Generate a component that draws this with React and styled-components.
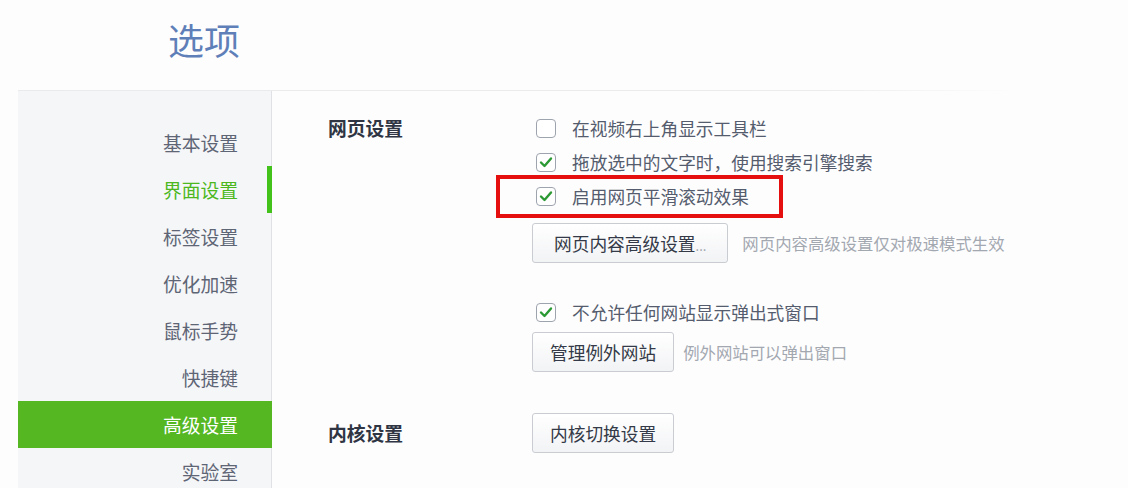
import styled, { createGlobalStyle } from "styled-components";

const GlobalStyle = createGlobalStyle`
  html, body {
    margin: 0;
    padding: 0;
    background: #fdfdfe;
    font-family: "Noto Sans CJK SC", "Noto Sans", sans-serif;
  }
`;

const Page = styled.div`
  width: 1128px;
  height: 488px;
  overflow: hidden;
  padding-left: 18px;
  box-sizing: border-box;
`;

const Header = styled.div`
  height: 90px;
  display: flex;
  align-items: center;
  padding-left: 150px;
  box-sizing: border-box;
`;

const Title = styled.h1`
  margin: 0;
  margin-top: -12px;
  font-size: 36px;
  font-weight: 400;
  color: #5f7fb8;
`;

const Divider = styled.div`
  width: 998px;
  height: 1px;
  background: linear-gradient(to right, #e9eaec 0%, #ebecee 80%, #fdfdfe 100%);
`;

const Body = styled.div`
  display: flex;
`;

const Sidebar = styled.nav`
  width: 254px;
  height: 398px;
  background: #f5f6f8;
  border-right: 1px solid #dfe1e5;
  box-sizing: border-box;
  padding-top: 28px;
  display: flex;
  flex-direction: column;
`;

const NavItem = styled.div`
  position: relative;
  height: 47px;
  flex: none;
  display: flex;
  align-items: center;
  justify-content: flex-end;
  padding-right: 34px;
  margin-right: -1px;
  font-size: 18.8px;
  color: ${(p) => (p.$selected ? "#ffffff" : p.$current ? "#4cb81e" : "#5e6575")};
  background: ${(p) => (p.$selected ? "#55b823" : "transparent")};

  &::after {
    content: "";
    display: ${(p) => (p.$current ? "block" : "none")};
    position: absolute;
    right: 0;
    top: 0;
    width: 5px;
    height: 47px;
    background: #43c21c;
  }
`;

const Content = styled.div`
  padding: 20px 0 0 56px;
  display: flex;
  flex-direction: column;
`;

const Section = styled.div`
  display: grid;
  grid-template-columns: 208px auto;
  margin-top: ${(p) => p.$gap || 0}px;
`;

const SectionLabel = styled.div`
  height: 34px;
  line-height: 34px;
  align-self: ${(p) => (p.$center ? "center" : "start")};
  font-size: 18.8px;
  font-weight: 700;
  color: #2f3543;
`;

const Options = styled.div`
  display: flex;
  flex-direction: column;
`;

const CheckRow = styled.label`
  position: relative;
  height: 34px;
  display: flex;
  align-items: center;
  gap: 16px;
  margin-top: ${(p) => p.$gap || 0}px;
  font-size: 17.7px;
  color: #545c6d;

  &::before {
    content: "";
    display: ${(p) => (p.$marked ? "block" : "none")};
    position: absolute;
    left: -40px;
    top: -4px;
    width: 287px;
    height: 43px;
    border: 4.5px solid #e60f0f;
    box-sizing: border-box;
  }
`;

const Box = styled.span`
  width: 20px;
  height: 19px;
  box-sizing: border-box;
  border: 1.5px solid #9ea4ad;
  border-radius: 4px;
  background: #fff;
  display: flex;
  align-items: center;
  justify-content: center;
`;

const ButtonRow = styled.div`
  display: flex;
  align-items: center;
  gap: ${(p) => p.$gap || 12}px;
  margin-top: ${(p) => p.$top || 0}px;
  margin-left: -4px;
`;

const Button = styled.button`
  height: 40px;
  padding: 0 ${(p) => p.$pad || 17}px;
  border: 1px solid #c9ccd1;
  border-radius: 3px;
  background: linear-gradient(#ffffff, #f2f3f5);
  font-family: inherit;
  font-size: 17.7px;
  color: #343a47;
  cursor: pointer;
`;

const Dots = styled.span`
  color: #9aa0a8;
  font-size: 13px;
`;

const Hint = styled.span`
  font-size: 16.4px;
  color: #a3a8b0;
`;

const Check = ({ checked }) => (
  <Box>
    {checked && (
      <svg width="14" height="12" viewBox="0 0 14 12">
        <path d="M2 6.5 L5.5 10 L12 2.5" fill="none" stroke="#2c9a34" strokeWidth="2.4" strokeLinecap="round" strokeLinejoin="round" />
      </svg>
    )}
  </Box>
);

const navItems = ["基本设置", "界面设置", "标签设置", "优化加速", "鼠标手势", "快捷键", "高级设置", "实验室"];

export default function App() {
  return (
    <Page>
      <GlobalStyle />
      <Header>
        <Title>选项</Title>
      </Header>
      <Divider />
      <Body>
        <Sidebar>
          {navItems.map((item) => (
            <NavItem key={item} $current={item === "界面设置"} $selected={item === "高级设置"}>
              {item}
            </NavItem>
          ))}
        </Sidebar>
        <Content>
          <Section>
            <SectionLabel>网页设置</SectionLabel>
            <Options>
              <CheckRow>
                <Check />
                在视频右上角显示工具栏
              </CheckRow>
              <CheckRow>
                <Check checked />
                拖放选中的文字时，使用搜索引擎搜索
              </CheckRow>
              <CheckRow $marked>
                <Check checked />
                启用网页平滑滚动效果
              </CheckRow>
              <ButtonRow $top={10} $gap={14}>
                <Button $pad={21}>
                  网页内容高级设置<Dots>...</Dots>
                </Button>
                <Hint>网页内容高级设置仅对极速模式生效</Hint>
              </ButtonRow>
              <CheckRow $gap={32}>
                <Check checked />
                不允许任何网站显示弹出式窗口
              </CheckRow>
              <ButtonRow $top={3} $gap={9}>
                <Button>管理例外网站</Button>
                <Hint>例外网站可以弹出窗口</Hint>
              </ButtonRow>
            </Options>
          </Section>
          <Section $gap={41}>
            <SectionLabel $center>内核设置</SectionLabel>
            <Options>
              <ButtonRow>
                <Button>内核切换设置</Button>
              </ButtonRow>
            </Options>
          </Section>
        </Content>
      </Body>
    </Page>
  );
}
